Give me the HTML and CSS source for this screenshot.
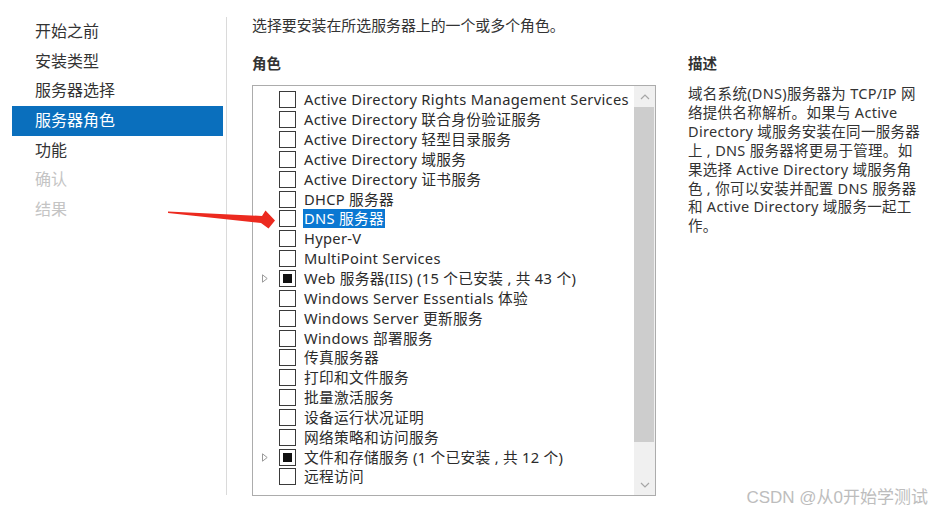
FILE: index.html
```html
<!DOCTYPE html>
<html lang="zh-CN">
<head>
<meta charset="utf-8">
<title>添加角色和功能向导</title>
<link rel="stylesheet" href="styles.css">
</head>
<body>
<div class="page">
  <nav class="nav">
    <div class="nav-item">开始之前</div>
    <div class="nav-item">安装类型</div>
    <div class="nav-item">服务器选择</div>
    <div class="nav-item active">服务器角色</div>
    <div class="nav-item">功能</div>
    <div class="nav-item disabled">确认</div>
    <div class="nav-item disabled">结果</div>
  </nav>
  <main class="main">
    <p class="intro">选择要安装在所选服务器上的一个或多个角色。</p>
    <div class="cols">
      <section class="roles">
        <h2 class="heading">角色</h2>
        <div class="listbox">
          <ul class="list">
            <li class="row"><span class="exp"></span><span class="cb"></span><span class="label">Active Directory Rights Management Services</span></li>
            <li class="row"><span class="exp"></span><span class="cb"></span><span class="label">Active Directory 联合身份验证服务</span></li>
            <li class="row"><span class="exp"></span><span class="cb"></span><span class="label">Active Directory 轻型目录服务</span></li>
            <li class="row"><span class="exp"></span><span class="cb"></span><span class="label">Active Directory 域服务</span></li>
            <li class="row"><span class="exp"></span><span class="cb"></span><span class="label">Active Directory 证书服务</span></li>
            <li class="row"><span class="exp"></span><span class="cb"></span><span class="label">DHCP 服务器</span></li>
            <li class="row"><span class="exp"></span><span class="cb"></span><span class="label selected">DNS 服务器</span></li>
            <li class="row"><span class="exp"></span><span class="cb"></span><span class="label">Hyper-V</span></li>
            <li class="row"><span class="exp"></span><span class="cb"></span><span class="label">MultiPoint Services</span></li>
            <li class="row"><span class="exp"><svg class="tri" width="6" height="9" viewBox="0 0 6 9"><path d="M0.5 0.8 L5.2 4.5 L0.5 8.2 Z" fill="none" stroke="#9a9a9a" stroke-width="1"/></svg></span><span class="cb partial"></span><span class="label">Web 服务器(IIS) (15 个已安装 , 共 43 个)</span></li>
            <li class="row"><span class="exp"></span><span class="cb"></span><span class="label">Windows Server Essentials 体验</span></li>
            <li class="row"><span class="exp"></span><span class="cb"></span><span class="label">Windows Server 更新服务</span></li>
            <li class="row"><span class="exp"></span><span class="cb"></span><span class="label">Windows 部署服务</span></li>
            <li class="row"><span class="exp"></span><span class="cb"></span><span class="label">传真服务器</span></li>
            <li class="row"><span class="exp"></span><span class="cb"></span><span class="label">打印和文件服务</span></li>
            <li class="row"><span class="exp"></span><span class="cb"></span><span class="label">批量激活服务</span></li>
            <li class="row"><span class="exp"></span><span class="cb"></span><span class="label">设备运行状况证明</span></li>
            <li class="row"><span class="exp"></span><span class="cb"></span><span class="label">网络策略和访问服务</span></li>
            <li class="row"><span class="exp"><svg class="tri" width="6" height="9" viewBox="0 0 6 9"><path d="M0.5 0.8 L5.2 4.5 L0.5 8.2 Z" fill="none" stroke="#9a9a9a" stroke-width="1"/></svg></span><span class="cb partial"></span><span class="label">文件和存储服务 (1 个已安装 , 共 12 个)</span></li>
            <li class="row"><span class="exp"></span><span class="cb"></span><span class="label">远程访问</span></li>
          </ul>
          <div class="scrollbar">
            <div class="sb-btn"><svg width="10" height="6" viewBox="0 0 10 6"><path d="M1 5 L5 1 L9 5" fill="none" stroke="#a6a6a6" stroke-width="1.2"/></svg></div>
            <div class="sb-thumb"></div>
            <div class="sb-track"></div>
            <div class="sb-btn"><svg width="10" height="6" viewBox="0 0 10 6"><path d="M1 1 L5 5 L9 1" fill="none" stroke="#a6a6a6" stroke-width="1.2"/></svg></div>
          </div>
        </div>
      </section>
      <section class="desc">
        <h2 class="heading">描述</h2>
        <p class="desc-text">域名系统(DNS)服务器为 TCP/IP 网<br>络提供名称解析。如果与 Active<br>Directory 域服务安装在同一服务器<br>上 , DNS 服务器将更易于管理。如<br>果选择 Active Directory 域服务角<br>色 , 你可以安装并配置 DNS 服务器<br>和 Active Directory 域服务一起工<br>作。</p>
      </section>
    </div>
  </main>
</div>
<svg class="annot" width="932" height="512" viewBox="0 0 932 512"><polygon points="168,211.5 262,216 265.5,210.5 275,220.5 268.5,228.5 261,223 168,213" fill="#ec2a1f"/></svg>
<div class="watermark">CSDN @从0开始学测试</div>
</body>
</html>
```

FILE: styles.css
```css
* { box-sizing: border-box; }
html, body {
  margin: 0;
  padding: 0;
  background: #ffffff;
}
body {
  width: 932px;
  height: 512px;
  overflow: hidden;
  position: relative;
  font-family: "Noto Sans", "Noto Sans CJK SC", sans-serif;
  color: #2b2b2b;
}
.page {
  display: flex;
  height: 512px;
}
.nav {
  width: 227px;
  margin-top: 17px;
  height: 478px;
  border-right: 1px solid #dadada;
  padding-right: 3px;
  flex-shrink: 0;
}
.nav-item {
  height: 29.7px;
  line-height: 29.7px;
  margin-left: 12px;
  padding-left: 23px;
  font-size: 16px;
  color: #333333;
}
.nav-item.active {
  background: #0a6fbd;
  color: #ffffff;
}
.nav-item.disabled {
  color: #c4c4c4;
}
.main {
  padding-left: 25px;
  padding-top: 15px;
  flex: 1;
}
.intro {
  margin: 0;
  font-size: 14.9px;
  line-height: 20px;
  color: #333333;
}
.cols {
  display: flex;
  margin-top: 18px;
}
.heading {
  margin: 0;
  font-size: 14.5px;
  line-height: 20px;
  font-weight: bold;
  color: #333333;
}
.roles {
  width: 404px;
}
.listbox {
  margin-top: 12px;
  height: 411px;
  border: 1px solid #acacac;
  display: flex;
}
.list {
  list-style: none;
  margin: 0;
  padding: 4px 0 0 0;
  flex: 1;
}
.row {
  display: flex;
  align-items: center;
  height: 19.85px;
  font-size: 14.7px;
  letter-spacing: 0.3px;
  color: #2b2b2b;
  white-space: nowrap;
}
.exp {
  width: 26px;
  height: 19px;
  display: flex;
  align-items: center;
  padding-left: 9px;
}
.cb {
  width: 17px;
  height: 17px;
  border: 1px solid #3a3a3a;
  background: #ffffff;
  margin-right: 8px;
  display: flex;
  align-items: center;
  justify-content: center;
  flex-shrink: 0;
}
.cb.partial::after {
  content: "";
  width: 9px;
  height: 9px;
  background: #111111;
}
.label {
  line-height: 19px;
}
.label.selected {
  background: #0a78d2;
  color: #ffffff;
  padding: 0 1px;
  margin-left: -1px;
}
.scrollbar {
  width: 21px;
  display: flex;
  flex-direction: column;
  background: #f0f0f0;
}
.sb-btn {
  height: 21px;
  display: flex;
  align-items: center;
  justify-content: center;
}
.sb-thumb {
  height: 335px;
  background: #cdcdcd;
  margin: 0 1px 0 0;
}
.sb-track {
  flex: 1;
}
.desc {
  margin-left: 32px;
  width: 240px;
}
.desc-text {
  margin: 11px 0 0 0;
  font-size: 14.5px;
  line-height: 18.9px;
  letter-spacing: 0.3px;
  color: #333333;
  white-space: nowrap;
}
.annot {
  position: absolute;
  left: 0;
  top: 0;
  pointer-events: none;
}
.watermark {
  position: absolute;
  right: 4px;
  bottom: 4px;
  font-size: 17px;
  color: #bdbdbd;
  text-shadow: 0 0 1px #ffffff;
  font-family: "Liberation Sans", "Noto Sans CJK SC", sans-serif;
}
```
